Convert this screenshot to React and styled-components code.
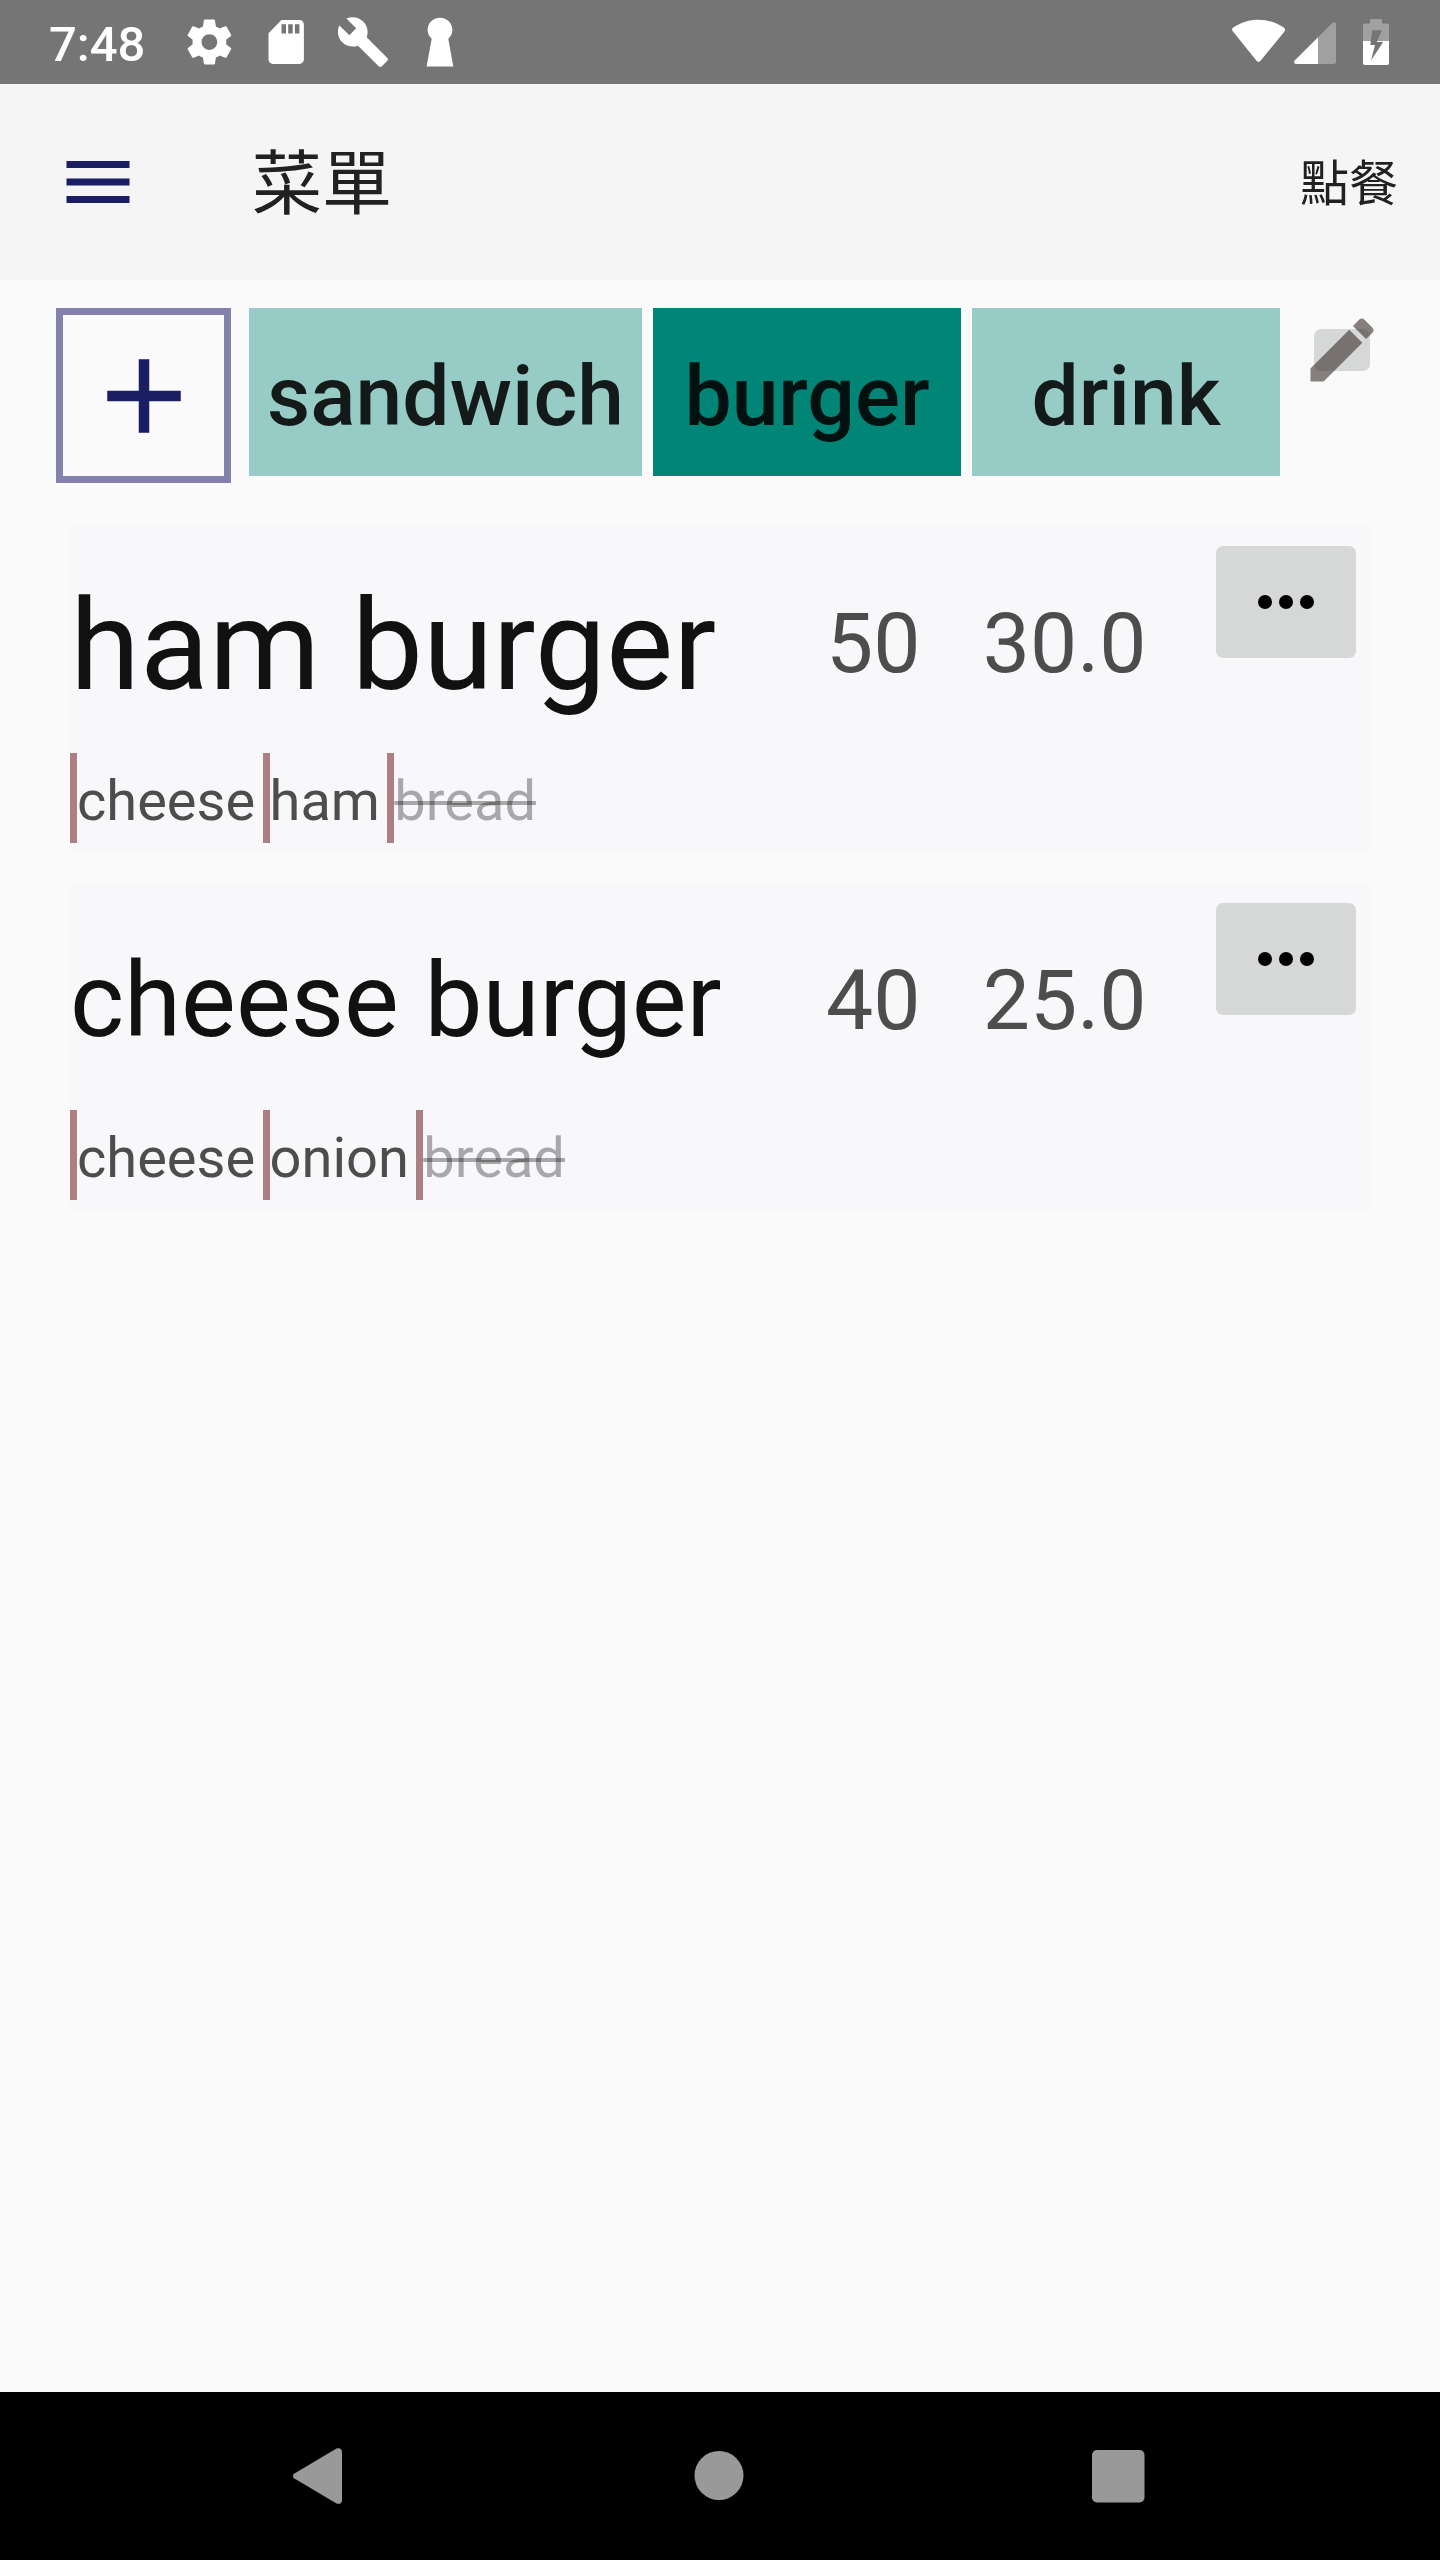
import React from "react";
import styled, { createGlobalStyle } from "styled-components";

const GlobalStyle = createGlobalStyle`
  * { box-sizing: border-box; }
  body { margin: 0; background: #fafafa; }
`;

const Screen = styled.div`
  width: 1440px;
  height: 2560px;
  display: flex;
  flex-direction: column;
  background: #fafafa;
  color: #212121;
  font-family: Roboto, "Noto Sans CJK TC", sans-serif;
  overflow: hidden;
`;

const StatusBar = styled.header`
  display: flex;
  justify-content: space-between;
  height: 84px;
  flex: none;
  padding: 0 44px 0 49px;
  background: #757575;
  color: #fff;
`;

const StatusGroup = styled.div`
  display: flex;
  align-items: center;
`;

const Clock = styled.span`
  width: 130px;
  padding-top: 5px;
  font-size: 49px;
  font-weight: 500;
  line-height: 84px;
`;

const Icon = styled.svg`
  display: block;
  flex: none;
  width: ${(p) => p.$w}px;
  height: ${(p) => p.$h || p.$w}px;
  margin-left: ${(p) => p.$ml || 0}px;
`;

const Toolbar = styled.nav`
  display: flex;
  align-items: center;
  flex: none;
  height: 196px;
  padding: 0 42px 0 56px;
  background: #f5f5f5;
`;

const Title = styled.h1`
  flex: 1;
  margin: 0 0 0 112px;
  padding-top: 6px;
  font-size: 70px;
  font-weight: 400;
  line-height: 82px;
`;

const OrderAction = styled.span`
  padding-top: 5px;
  font-size: 49px;
  line-height: 58px;
`;

const CategoryRow = styled.section`
  display: flex;
  flex: none;
  height: 245px;
  padding: 28px 56px 0;
`;

const AddButton = styled.button`
  display: flex;
  align-items: center;
  justify-content: center;
  width: 175px;
  height: 175px;
  margin: 0 18px 0 0;
  padding: 0;
  border: 7px solid #8481ac;
  background: transparent;
`;

const Tabs = styled.div`
  display: flex;
  gap: 11px;
`;

const Tab = styled.button`
  width: ${(p) => p.$width}px;
  height: 168px;
  padding: 1px 0 0;
  border: 0;
  background: ${(p) => (p.$active ? "#008577" : "#97ccc6")};
  color: ${(p) => (p.$active ? "#00110f" : "#131a19")};
  font-family: inherit;
  font-size: 84px;
  font-weight: 500;
  line-height: 176px;
  white-space: nowrap;
`;

const EditButton = styled.button`
  display: block;
  width: 84px;
  height: 84px;
  margin: 0 0 0 20px;
  padding: 0;
  border: 0;
  background: transparent;
`;

const Menu = styled.main`
  display: flex;
  flex-direction: column;
  flex: 1;
  gap: 28px;
  padding: 0 70px;
`;

const Card = styled.article`
  height: 329px;
  background: #f8f8fb;
`;

const CardTop = styled.div`
  display: flex;
  height: 228px;
`;

const Name = styled.h2`
  width: 700px;
  margin: 0;
  color: #111;
  font-size: ${(p) => p.$size}px;
  font-weight: 400;
  line-height: ${(p) => p.$line}px;
  white-space: nowrap;
`;

const Amount = styled.span`
  width: ${(p) => p.$width}px;
  color: #4d4d4d;
  font-size: 84px;
  line-height: 237px;
  text-align: right;
`;

const MoreButton = styled.button`
  display: flex;
  align-items: center;
  justify-content: center;
  gap: 7px;
  width: 140px;
  height: 112px;
  margin: 21px 14px 0 auto;
  padding: 0;
  border: 0;
  border-radius: 7px;
  background: #d6d7d7;
`;

const Dot = styled.i`
  width: 14px;
  height: 14px;
  border-radius: 50%;
  background: #000;
`;

const Ingredients = styled.div`
  display: flex;
`;

const Ingredient = styled.span`
  height: 90px;
  margin-right: 7.4px;
  border-left: 7px solid #ac8080;
  color: ${(p) => (p.$removed ? "rgba(0, 0, 0, 0.32)" : "#4d4d4d")};
  font-size: 56px;
  line-height: 96px;
  text-decoration: ${(p) => (p.$removed ? "line-through" : "none")};
  text-decoration-thickness: 3.5px;
`;

const NavBar = styled.footer`
  display: flex;
  align-items: center;
  flex: none;
  height: 168px;
  padding-left: 293px;
  background: #000;
`;

const categories = [
  { name: "sandwich", width: 393 },
  { name: "burger", width: 308, active: true },
  { name: "drink", width: 308 },
];

const items = [
  {
    name: "ham burger",
    size: 126.9,
    line: 241,
    price: "50",
    cost: "30.0",
    parts: [["cheese"], ["ham"], ["bread", true]],
  },
  {
    name: "cheese burger",
    size: 103.4,
    line: 237,
    price: "40",
    cost: "25.0",
    parts: [["cheese"], ["onion"], ["bread", true]],
  },
];

const Status = () => (
  <StatusBar>
    <StatusGroup>
      <Clock>7:48</Clock>
      <Icon $w={60} viewBox="0 0 60 60" fill="#fff">
        <path
          transform="translate(3.400 3) scale(2.25)"
          d="M19.43 12.98c.04-.32.07-.64.07-.98s-.03-.66-.07-.98l2.11-1.65c.19-.15.24-.42.12-.64l-2-3.46c-.12-.22-.39-.3-.61-.22l-2.49 1c-.52-.4-1.08-.73-1.69-.98l-.38-2.65C14.46 2.18 14.25 2 14 2h-4c-.25 0-.46.18-.49.42l-.38 2.65c-.61.25-1.17.59-1.69.98l-2.49-1c-.23-.09-.49 0-.61.22l-2 3.46c-.13.22-.07.49.12.64l2.11 1.65c-.04.32-.07.65-.07.98s.03.66.07.98l-2.11 1.65c-.19.15-.24.42-.12.64l2 3.46c.12.22.39.3.61.22l2.49-1c.52.4 1.08.73 1.69.98l.38 2.65c.03.24.24.42.49.42h4c.25 0 .46-.18.49-.42l.38-2.65c.61-.25 1.17-.59 1.69-.98l2.49 1c.23.09.49 0 .61-.22l2-3.46c.12-.22.07-.49-.12-.64l-2.11-1.65zM12 15.5c-1.93 0-3.5-1.57-3.5-3.5s1.57-3.5 3.5-3.5 3.5 1.57 3.5 3.5-1.57 3.5-3.5 3.5z"
        />
      </Icon>
      <Icon $w={36} $h={46} $ml={29} viewBox="0 0 36 46" fill="#fff">
        <path d="M31.5 1H13.4L.5 14.3V40.6c0 2.4 2 4.4 4.4 4.4h26.6c2.4 0 4.4-2 4.4-4.4V5.4C35.9 3 33.9 1 31.5 1zM18 14.5h-4.5V5.2H18v9.300zm6.700 0h-4.500V5.200h4.500v9.300zm6.700 0h-4.500V5.200h4.500v9.300z" />
      </Icon>
      <Icon $w={50} $h={50} $ml={34} viewBox="1 1 22 22" fill="#fff">
        <path d="M22.700 19l-9.100-9.100c.9-2.300.4-5-1.500-6.900-2-2-5-2.400-7.400-1.300L9 6 6 9 1.600 4.700C.4 7.100.9 10.100 2.900 12.100c1.900 1.900 4.600 2.400 6.900 1.500l9.100 9.100c.4.4 1 .4 1.400 0l2.300-2.300c.5-.4.5-1.100.1-1.400z" />
      </Icon>
      <Icon $w={28} $h={50} $ml={38} viewBox="0 0 28 50" fill="#fff">
        <path d="M13.900.7C7.100.7 1.600 6.100 1.600 12.800c0 3.600 1.500 6.500 4.100 8.900L.6 49.500h26.700L22.300 21.700c2.600-2.400 4.100-5.300 4.100-8.900C26.400 6.100 20.800.7 13.900.7z" />
      </Icon>
    </StatusGroup>
    <StatusGroup>
      <Icon $w={164} $h={84} viewBox="1232 0 164 84">
        <path
          d="M1233 31.500C1231.600 30.300 1231.700 28.500 1233.200 27.500 1241 22.300 1249.500 19.700 1258.500 19.700S1276 22.300 1283.800 27.500C1285.300 28.500 1285.400 30.300 1284.300 31.700L1260.500 60.800C1259.300 62.300 1257.700 62.300 1256.500 60.800Z"
          fill="#fff"
        />
        <path d="M1318 37.200L1332.300 22.900C1333.700 21.500 1336 22.300 1336 24.300V61.500Q1336 64 1333.500 64H1318Z" fill="#a0a0a0" />
        <path d="M1318 37.200L1294.900 60.300C1293.200 62 1294.200 64 1296.300 64H1318Z" fill="#fff" />
        <path d="M1370 19H1382V23.500H1387Q1389 23.500 1389 25.500V41H1363V25.500Q1363 23.500 1365 23.500H1370Z" fill="#a0a0a0" />
        <path d="M1363 41H1389V63Q1389 65 1387 65H1365Q1363 65 1363 63Z" fill="#fff" />
        <path d="M1372.200 30.300H1382L1376.700 42H1383.200L1371 60.500L1375 45H1370.300Z" fill="#757575" />
      </Icon>
    </StatusGroup>
  </StatusBar>
);

export default function App() {
  return (
    <Screen>
      <GlobalStyle />
      <Status />
      <Toolbar>
        <Icon $w={84} viewBox="0 0 24 24" fill="#1b1e63">
          <path d="M3 18h18v-2H3v2zm0-5h18v-2H3v2zm0-7v2h18V6H3z" />
        </Icon>
        <Title>菜單</Title>
        <OrderAction>點餐</OrderAction>
      </Toolbar>
      <CategoryRow>
        <AddButton aria-label="Add">
          <Icon $w={126} $ml={1} viewBox="0 0 24 24" fill="#1b1e63">
            <path d="M19 13h-6v6h-2v-6H5v-2h6V5h2v6h6v2z" />
          </Icon>
        </AddButton>
        <Tabs>
          {categories.map((c) => (
            <Tab key={c.name} $width={c.width} $active={c.active}>
              {c.name}
            </Tab>
          ))}
        </Tabs>
        <EditButton aria-label="Edit">
          <Icon $w={84} viewBox="0 0 24 24">
            <rect x="4" y="6" width="16" height="12" rx="2" fill="#d6d7d7" />
            <path
              fill="#3d3431"
              fillOpacity=".62"
              d="M3 17.250V21h3.750L17.810 9.940l-3.750-3.750L3 17.250zM20.710 7.040c.39-.39.39-1.020 0-1.410l-2.340-2.340c-.39-.39-1.020-.39-1.410 0l-1.830 1.830 3.750 3.750 1.830-1.830z"
            />
          </Icon>
        </EditButton>
      </CategoryRow>
      <Menu>
        {items.map((item) => (
          <Card key={item.name}>
            <CardTop>
              <Name $size={item.size} $line={item.line}>
                {item.name}
              </Name>
              <Amount $width={150.5}>{item.price}</Amount>
              <Amount $width={226}>{item.cost}</Amount>
              <MoreButton aria-label="More">
                <Dot />
                <Dot />
                <Dot />
              </MoreButton>
            </CardTop>
            <Ingredients>
              {item.parts.map(([label, removed]) => (
                <Ingredient key={label} $removed={removed}>
                  {label}
                </Ingredient>
              ))}
            </Ingredients>
          </Card>
        ))}
      </Menu>
      <NavBar>
        <Icon $w={49} $h={56} viewBox="0 0 49 56" fill="#999">
          <path d="M1 25.800L43.500.6C46 -.6 49 .6 49 3.500V52.500C49 55.400 46 56.600 43.500 55.400L1 30.200C-.4 29 -.4 27 1 25.800Z" />
        </Icon>
        <Icon $w={50} $ml={352} viewBox="0 0 50 50" fill="#999">
          <circle cx="25" cy="24.500" r="24.500" />
        </Icon>
        <Icon $w={53} $ml={348} viewBox="0 0 53 53" fill="#999">
          <rect width="52.500" height="52.500" rx="5" />
        </Icon>
      </NavBar>
    </Screen>
  );
}
